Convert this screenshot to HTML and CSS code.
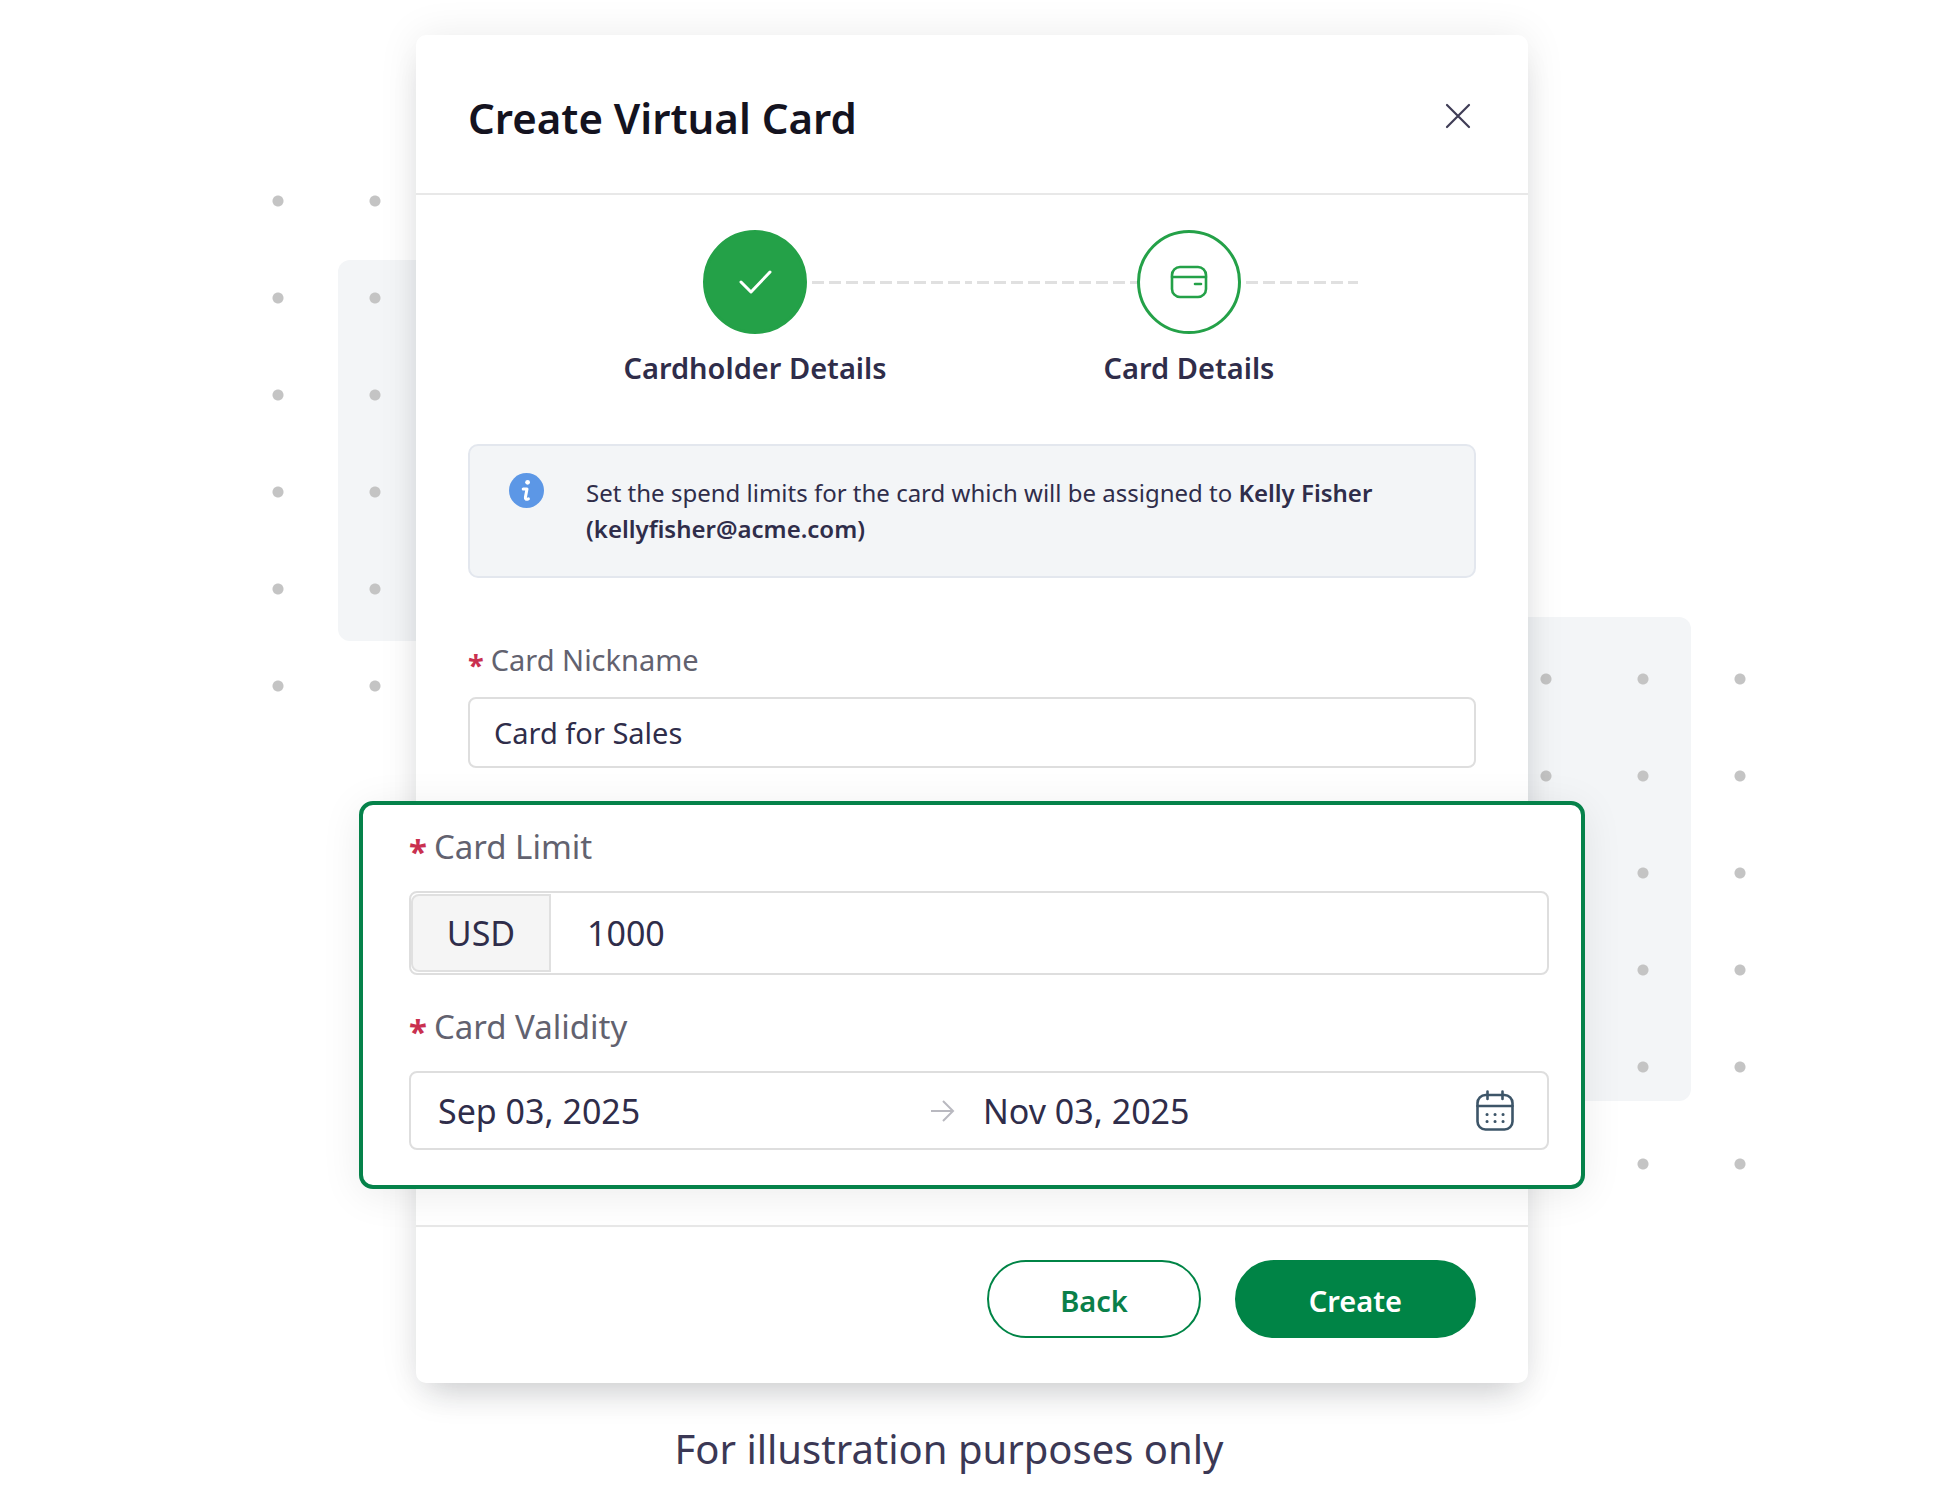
FILE: index.html
```html
<!DOCTYPE html>
<html lang="en">
<head>
  <meta charset="UTF-8" />
  <meta name="viewport" content="width=device-width, initial-scale=1" />
  <title>Create Virtual Card</title>
  <link rel="stylesheet" href="styles.css">
</head>
<body>

  <main class="stage">
    <!-- Background decoration -->
    <div class="panel panel-left"></div>
    <div class="panel panel-right"></div>
    <div class="dots dots-left"></div>
    <div class="dots dots-right"></div>

    <!-- Modal -->
    <form class="modal">
      <header class="modal-header">
        <h1>Create Virtual Card</h1>
        <button type="button" class="close-btn" aria-label="Close">
          <svg width="36" height="36" viewBox="0 0 36 36" fill="none" stroke="#3f3d56" stroke-width="2.2" stroke-linecap="round">
            <path d="M7 7l22 22M29 7L7 29" />
          </svg>
        </button>
      </header>

      <div class="modal-body">
        <!-- Steps -->
        <ol class="steps">
          <li class="step">
            <div class="step-track">
              <span class="rail empty"></span>
              <span class="step-icon done">
                <svg width="40" height="40" viewBox="0 0 40 40" fill="none" stroke="#fff" stroke-width="3" stroke-linecap="round" stroke-linejoin="round">
                  <path d="M6 20l10 10L35 10" />
                </svg>
              </span>
              <span class="rail"></span>
            </div>
            <span class="step-title">Cardholder Details</span>
          </li>
          <li class="step">
            <div class="step-track">
              <span class="rail"></span>
              <span class="step-icon">
                <svg width="40" height="40" viewBox="0 0 40 40" fill="none" stroke="#24a148" stroke-width="2.6" stroke-linecap="round">
                  <rect x="3" y="5" width="34" height="30" rx="8" />
                  <path d="M3 15h34M26 22h6" />
                </svg>
              </span>
              <span class="rail last"></span>
            </div>
            <span class="step-title">Card Details</span>
          </li>
        </ol>

        <!-- Info banner -->
        <div class="info">
          <svg class="info-icon" width="35" height="35" viewBox="0 0 35 35" fill="none">
            <circle cx="17.5" cy="17.5" r="17.5" fill="#5c97e6" />
            <circle cx="18.6" cy="9.3" r="2.4" fill="#fff" />
            <path d="M14.2 16h3.8l-1.6 8.400q-.5 2.800 3 1.400" stroke="#fff" stroke-width="3" stroke-linecap="round" stroke-linejoin="round" />
          </svg>
          <p>Set the spend limits for the card which will be assigned to <strong>Kelly Fisher</strong> <strong>(kellyfisher@acme.com)</strong></p>
        </div>

        <div class="field">
          <label for="nickname"><span class="required">*</span>Card Nickname</label>
          <input type="text" id="nickname" class="box" value="Card for Sales">
        </div>

        <!-- Highlighted fields -->
        <section class="highlight">
          <div class="field">
            <label for="limit"><span class="required">*</span>Card Limit</label>
            <div class="box amount">
              <span class="currency">USD</span>
              <input type="text" id="limit" value="1000">
            </div>
          </div>
          <div class="field">
            <label for="valid-from"><span class="required">*</span>Card Validity</label>
            <div class="box range">
              <input type="text" id="valid-from" value="Sep 03, 2025">
              <svg class="arrow" width="24" height="28" viewBox="0 0 24 28" fill="none" stroke="#b9b9c0" stroke-width="2">
                <path d="M0 14h22M12 4l10 10-10 10" />
              </svg>
              <input type="text" id="valid-to" value="Nov 03, 2025" aria-label="Card Validity end">
              <svg class="calendar" width="38" height="42" viewBox="0 0 38 42" fill="none" stroke="#3d5568" stroke-width="2.6" stroke-linecap="round">
                <rect x="1.5" y="5" width="35" height="34.5" rx="8" />
                <path d="M1.5 16h35M11.5 1.5v7.5M26.5 1.5v7.5" />
                <path d="M11 24.5h.1M19 24.5h.1M27 24.5h.1M11 31.5h.1M19 31.5h.1M27 31.5h.1" stroke-width="3" />
              </svg>
            </div>
          </div>
        </section>
      </div>

      <footer class="modal-footer">
        <button type="button" class="btn btn-outline">Back</button>
        <button type="submit" class="btn btn-primary">Create</button>
      </footer>
    </form>
  </main>

  <p class="caption">For illustration purposes only</p>

</body>
</html>
```
FILE: styles.css
```css
* { box-sizing: border-box; margin: 0; padding: 0; }
body { background: #fff; color: #2f2d4a; font-family: "Noto Sans", Roboto, sans-serif; font-size: 29px; overflow-x: hidden; }
button, input { font: inherit; color: inherit; }

/* ===== Stage ===== */
.stage { position: relative; width: 100%; max-width: 1112px; margin: 35px auto 0; }

/* ===== Background decoration ===== */
.panel { position: absolute; background: #f3f5f7; border-radius: 12px; }
.panel-left { left: -78px; top: 225px; width: 200px; height: 381px; }
.panel-right { right: -163px; top: 582px; width: 300px; height: 484px; }
.dots {
  position: absolute;
  height: 582px;
  background-image: radial-gradient(circle at 6px 6px, #c4c4c4 5px, transparent 6px);
  background-size: 97px 97px;
}
.dots-left { left: -144px; top: 160px; width: 194px; }
.dots-right { right: -303px; top: 638px; width: 291px; }

/* ===== Modal ===== */
.modal {
  position: relative;
  background: #fff;
  border-radius: 10px;
  box-shadow: 0 0 40px rgba(0,0,0,0.08), 0 20px 32px -12px rgba(20,30,40,0.18);
}
.modal-header {
  display: flex;
  justify-content: space-between;
  align-items: center;
  height: 160px;
  padding: 4px 52px 0;
  border-bottom: 2px solid #e8e8e8;
}
.modal-header h1 { padding-top: 4px; font-size: 42px; line-height: 56px; font-weight: 600; color: #14131f; }
.close-btn { width: 36px; height: 36px; border: none; background: none; cursor: pointer; }
.close-btn svg { display: block; }
.modal-body { padding: 35px 52px 36px; }

/* ===== Steps ===== */
.steps { display: flex; justify-content: center; list-style: none; margin-bottom: 58px; }
.step { width: 434px; text-align: center; }
.step-track { display: grid; grid-template-columns: 1fr auto 1fr; align-items: center; }
.rail {
  height: 3px;
  background: repeating-linear-gradient(90deg, transparent 0 5px, #e0e0e0 5px 17px);
}
.rail.empty { background: none; }
.rail.last { margin-right: 48px; }
.step-icon {
  display: flex;
  align-items: center;
  justify-content: center;
  width: 104px;
  height: 104px;
  border: 3px solid #24a148;
  border-radius: 50%;
}
.step-icon.done { background: #24a148; }
.step-title { display: block; margin-top: 16px; line-height: 36px; font-weight: 600; }

/* ===== Info banner ===== */
.info {
  display: flex;
  align-items: flex-start;
  gap: 42px;
  padding: 27px 60px 29px 39px;
  background: #f3f5f7;
  border: 2px solid #e3e7ee;
  border-radius: 10px;
  margin-bottom: 62px;
}
.info-icon { flex-shrink: 0; }
.info p { padding-top: 2px; font-size: 24px; line-height: 36px; }
.info strong { font-weight: 600; }

/* ===== Fields ===== */
.field label { display: flex; margin-bottom: 17px; line-height: 40px; color: #62626f; }
.required { padding-top: 10px; margin-right: 7px; line-height: 30px; font-weight: 700; color: #c9304f; }
.box { display: flex; align-items: center; width: 100%; border: 2px solid #dedede; border-radius: 8px; background: #fff; }
.box input { flex: 1; min-width: 0; border: none; outline: none; background: none; }
input.box { height: 71px; padding: 0 24px; outline: none; }

/* ===== Highlighted fields ===== */
.highlight {
  position: relative;
  margin: 33px -109px 0;
  padding: 22px 32px 35px 46px;
  background: #fff;
  border: 4px solid #05824a;
  border-radius: 14px;
  box-shadow: 0 6px 40px rgba(0,0,0,0.08);
}
.highlight .field + .field { margin-top: 32px; }
.highlight label { margin-bottom: 24px; font-size: 33px; }
.amount { height: 84px; font-size: 34px; }
.currency {
  width: 140px;
  height: 78px;
  line-height: 74px;
  text-align: center;
  background: #f5f5f5;
  border: 2px solid #e0e0e0;
  border-radius: 8px 0 0 8px;
}
.amount input { height: 76px; padding: 0 36px; }
.range { height: 79px; padding: 0 33px 0 27px; font-size: 34px; }
.range .arrow { flex-shrink: 0; margin-right: 28px; }
.range .calendar { flex-shrink: 0; }

/* ===== Footer ===== */
.modal-footer {
  display: flex;
  justify-content: flex-end;
  gap: 34px;
  padding: 33px 52px 45px;
  border-top: 2px solid #e8e8e8;
}
.btn { height: 78px; padding: 2px 70px 0; border: 2px solid #008446; border-radius: 39px; font-weight: 600; cursor: pointer; }
.btn-outline { padding: 2px 71px 0; background: #fff; color: #0a7f49; }
.btn-primary { padding: 2px 72px 0; background: #008446; color: #fff; }

.caption { margin-top: 38px; padding-right: 46px; text-align: center; font-size: 40px; line-height: 56px; color: #3b3855; }
```
